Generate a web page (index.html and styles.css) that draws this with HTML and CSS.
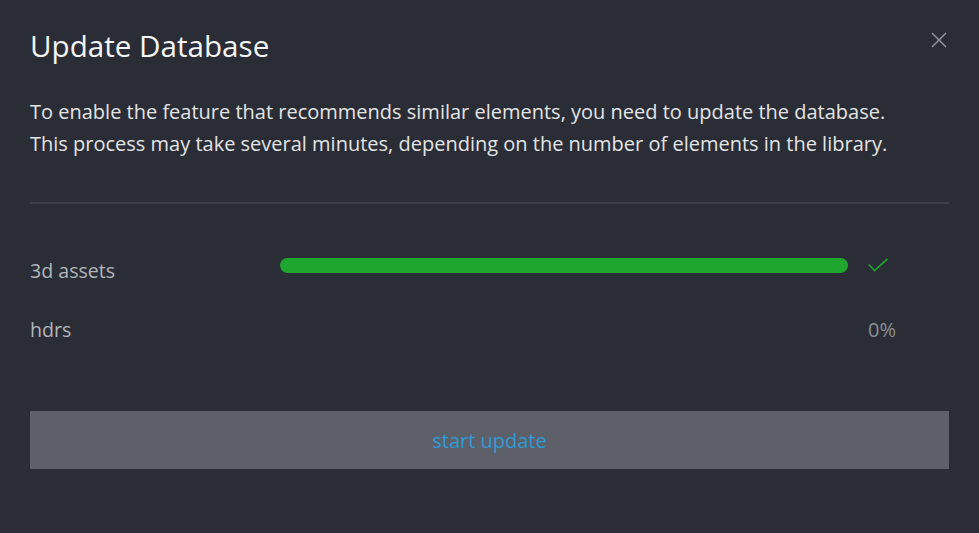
FILE: index.html
```html
<!DOCTYPE html>
<html>
<head>
<meta charset="utf-8">
<link rel="stylesheet" href="styles.css">
</head>
<body>
<div class="dialog">
  <div class="header">
    <h1 class="title">Update Database</h1>
    <button class="close" aria-label="close">
      <svg width="16" height="16" viewBox="0 0 16 16"><path d="M1 1L15 15M15 1L1 15" stroke="#9a9ca3" stroke-width="1.3" fill="none"/></svg>
    </button>
  </div>
  <p class="desc">To enable the feature that recommends similar elements, you need to update the database.<br>This process may take several minutes, depending on the number of elements in the library.</p>
  <div class="divider"></div>
  <div class="rows">
    <div class="row">
      <span class="label">3d assets</span>
      <div class="track"><div class="fill" style="width:100%"></div></div>
      <span class="status">
        <svg width="21" height="15" viewBox="0 0 21 15"><path d="M0.8 6.5L6.5 12.6L19.5 0.8" stroke="#1fa62f" stroke-width="1.6" fill="none"/></svg>
      </span>
    </div>
    <div class="row">
      <span class="label">hdrs</span>
      <div class="track"></div>
      <span class="pct">0%</span>
    </div>
  </div>
  <button class="start">start update</button>
</div>
</body>
</html>
```
FILE: styles.css
```css
html, body {
  margin: 0;
  padding: 0;
  background: #2a2d35;
}
body {
  font-family: "Open Sans", "Noto Sans", sans-serif;
  width: 979px;
  height: 533px;
  overflow: hidden;
}
.dialog {
  padding: 26px 30px 0 30px;
}
.header {
  display: flex;
  justify-content: space-between;
  align-items: flex-start;
}
.title {
  margin: 0;
  font-size: 29.6px;
  font-weight: 400;
  color: #f4f5f6;
  line-height: 40px;
}
.close {
  background: none;
  border: none;
  padding: 0;
  margin: 6px 2px 0 0;
  width: 16px;
  height: 16px;
  cursor: pointer;
  display: block;
}
.close svg { display: block; }
.desc {
  margin: 30px 0 0 0;
  font-size: 20px;
  line-height: 32px;
  color: #e3e4e6;
}
.divider {
  margin-top: 42px;
  height: 2px;
  background: #3b3e45;
}
.rows {
  margin-top: 52px;
  display: flex;
  flex-direction: column;
  gap: 29px;
}
.row {
  display: grid;
  grid-template-columns: 250px 568px 1fr;
  align-items: start;
  height: 30px;
}
.label {
  font-size: 19.6px;
  line-height: 30px;
  color: #b3b5ba;
}
.track {
  margin-top: 2px;
  height: 15px;
  border-radius: 8px;
}
.fill {
  height: 100%;
  border-radius: 8px;
  background: #1fa62f;
}
.status {
  padding-left: 20px;
  padding-top: 2px;
  display: flex;
}
.status svg { display: block; }
.pct {
  padding-left: 20px;
  font-size: 20px;
  line-height: 30px;
  color: #8b8e94;
}
.start {
  display: block;
  width: 100%;
  margin-top: 66px;
  height: 58px;
  border: none;
  background: #5d6069;
  color: #2e9bd6;
  font-family: "Open Sans", "Noto Sans", sans-serif;
  font-size: 20px;
  padding: 0;
  cursor: pointer;
}
```
